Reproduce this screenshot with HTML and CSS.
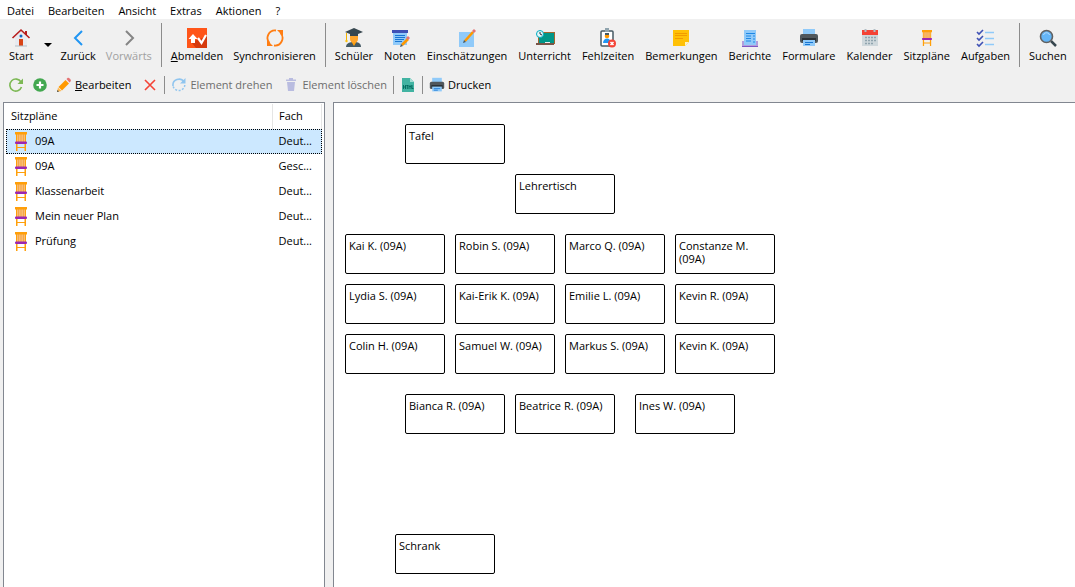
FILE: index.html
```html
<!DOCTYPE html>
<html lang="de">
<head>
<meta charset="utf-8">
<title>Sitzpläne</title>
<link rel="stylesheet" href="styles.css">
</head>
<body>
<svg class="defs" aria-hidden="true">
  <symbol id="chair" viewBox="0 0 20 20">
    <path fill="#f9bd72" d="M5.500 3h9v8h-9z"/>
    <path stroke="#f5a54a" d="M7.500 3v8M10 3v8M12.500 3v8"/>
    <path fill="#ff9f0a" d="M4 1h12v2.500H4zM5 3h1v8H5zM14 3h1v8h-1zM5 13h1.500v7H5zM13.500 13H15v7h-1.500zM6 16h8v1H6z"/>
    <rect x="4" y="10.500" width="12" height="2.500" rx="1" fill="#9c27b0"/>
  </symbol>
  <symbol id="printer" viewBox="0 0 20 20">
    <path fill="#90caf9" d="M4 1h12v6H4z"/>
    <rect x="1" y="6" width="18" height="9" rx="2" fill="#50575c"/>
    <path fill="#2b3238" d="M3 10h14v3H3z"/>
    <path fill="#90caf9" d="M4 12h12v6H4z"/>
    <path stroke="#1976d2" d="M6 14.500h8M6 16.500h5"/>
  </symbol>
</svg>

<nav class="menubar">
  <button>Datei</button><button>Bearbeiten</button><button>Ansicht</button><button>Extras</button><button>Aktionen</button><button>?</button>
</nav>

<div class="toolbar" role="toolbar">
  <button class="tool">
    <svg viewBox="0 0 20 20"><path fill="#e8eaf0" d="M4 9l6-6 6 6v9H4z"/><path fill="#b71c1c" d="M14 3h2v4h-2z"/><path fill="none" stroke="#b71c1c" stroke-width="1.600" d="M1.500 10L10 2l8.500 8"/><path fill="#d84315" d="M8 11h4v7H8z"/><circle cx="10" cy="8" r="1.500" fill="#1565c0"/><path stroke="#b0bec5" d="M4 18h12"/></svg>
    <span>Start</span>
  </button>
  <button class="drop" aria-label="Startmenü"><svg viewBox="0 0 8 4"><path d="M0 0h8L4 4z"/></svg></button>
  <button class="tool">
    <svg viewBox="0 0 20 20"><path fill="none" stroke="#2196f3" stroke-width="2" d="M14 3l-7 7 7 7"/></svg>
    <span>Zurück</span>
  </button>
  <button class="tool" disabled>
    <svg viewBox="0 0 20 20"><path fill="none" stroke="#858585" stroke-width="2" d="M7 3l7 7-7 7"/></svg>
    <span>Vorwärts</span>
  </button>
  <span class="sep"></span>
  <button class="tool">
    <svg viewBox="0 0 20 20"><path fill="#ff5519" d="M0 0h20v20H0z"/><path fill="#d63a0d" d="M4 14l9-3 7-3v12H9z"/><path fill="#fff" d="M1.500 11l4.500-5 4.500 5H8v4H4v-4z"/><path fill="none" stroke="#fff" stroke-width="2.200" d="M11 10l3.500 5L19 7"/></svg>
    <span><u>A</u>bmelden</span>
  </button>
  <button class="tool">
    <svg viewBox="0 0 20 20"><path fill="none" stroke="#ff7d12" stroke-width="1.800" d="M11 2.500A7.500 7.500 0 0 0 4.500 15M9 17.500A7.500 7.500 0 0 0 15.500 5"/><path fill="#ff7d12" d="M12 2h6v6zM8 18H2v-6z" transform="matrix(1 0 0 1 0 0)"/></svg>
    <span>Synchronisieren</span>
  </button>
  <span class="sep"></span>
  <div class="group">
  <button class="tool">
    <svg viewBox="0 0 20 20"><path fill="#455a64" d="M2 19c0-4 4-5 8-5s7 1 7 5z"/><path fill="#ff9f0a" d="M7 13h6l-3 5z"/><path fill="#ffa52b" d="M6 6h8v5c0 5-8 5-8 0z"/><path fill="#37474f" d="M10 0l9 4-5 2v2H6V6L1 4z"/><path fill="none" stroke="#f4b400" d="M2.500 5v8"/><circle cx="2.500" cy="13" r="1.200" fill="#ffc107"/></svg>
    <span>Schüler</span>
  </button>
  <button class="tool">
    <svg viewBox="0 0 20 20"><path fill="#90caf9" d="M3 2h14v15H3z"/><path fill="#3f51b5" d="M2 2h16v3H2z"/><path stroke="#1976d2" d="M5 7.500h10M5 9.500h10M5 11.500h9M5 13.500h7"/><path stroke="#ff9800" stroke-width="2.600" d="M12 17l6-6"/><path fill="#e57373" d="M16 10l2-2 2 2-2 2z"/><path fill="#455a64" d="M10 19l1-3 2 2z"/></svg>
    <span>Noten</span>
  </button>
  <button class="tool">
    <svg viewBox="0 0 20 20"><path fill="#90caf9" d="M2 4h15v15H2z"/><path stroke="#ff9800" stroke-width="2.600" d="M8 13l8-9"/><path fill="#e57373" d="M15 3l2-2 2 2-2 2z"/><path fill="#455a64" d="M6 15l1-3 2 2z"/></svg>
    <span>Einschätzungen</span>
  </button>
  <button class="tool">
    <svg viewBox="0 0 20 20"><path fill="#a1662f" d="M3 4h17v12H3z"/><path fill="#009688" d="M4 5h15v10H4z"/><path fill="#795548" d="M1 15h18v2H1z"/><circle cx="5" cy="6" r="3.500" fill="#e0f7fa" stroke="#00acc1"/><path fill="none" stroke="#263238" d="M5 4v2l2 1"/><path fill="#eceff1" d="M10 14h5v1h-5z"/></svg>
    <span>Unterricht</span>
  </button>
  <button class="tool">
    <svg viewBox="0 0 20 20"><rect x="3" y="3" width="12" height="15" rx="1" fill="#fff" stroke="#455a64" stroke-width="1.500"/><path fill="#90a4ae" d="M7 0h4v4H7z"/><circle cx="9" cy="8" r="2.300" fill="#ff9800"/><path fill="#455a64" d="M7 5h4v2H7z"/><path fill="#2196f3" d="M5 15c0-6 8-6 8 0z"/><circle cx="14" cy="15.500" r="4" fill="#f44336"/><path stroke="#fff" stroke-width="1.500" d="M12.500 14l3 3M15.500 14l-3 3"/></svg>
    <span>Fehlzeiten</span>
  </button>
  <button class="tool">
    <svg viewBox="0 0 20 20"><path fill="#ffc107" d="M2 2h16v12l-4 4H2z"/><path fill="#fff3c4" d="M18 14l-4 4v-4z"/><path stroke="#f29b00" d="M4 5.500h12M4 7.500h12M4 10.500h8"/></svg>
    <span>Bemerkungen</span>
  </button>
  <button class="tool">
    <svg viewBox="0 0 20 20"><path fill="#b39ddb" d="M2 13h16v6H2z"/><path fill="#90caf9" d="M4 2h12v15H4z"/><path stroke="#1e88e5" stroke-width="1.200" d="M6 5.500h9M6 8h5M6 10.500h5M6 13h5M13 8h2M13 11h2M13 14h2"/><path fill="#7e57c2" d="M2 18h16v1H2z"/></svg>
    <span>Berichte</span>
  </button>
  <button class="tool"><svg><use href="#printer"/></svg><span>Formulare</span></button>
  <button class="tool">
    <svg viewBox="0 0 20 20"><path fill="#cfd8dc" d="M2 5h16v13H2z"/><path fill="#f44336" d="M2 2h16v5H2z"/><path stroke="#b0bec5" stroke-width="2" d="M5.500 1v3M14.500 1v3"/><path stroke="#90a4ae" stroke-width="1.500" stroke-dasharray="2 1" d="M5 9.500h11M5 12.500h11M5 15.500h8"/></svg>
    <span>Kalender</span>
  </button>
  <button class="tool"><svg viewBox="-2 -1 24 23"><use href="#chair" width="20" height="20"/></svg><span>Sitzpläne</span></button>
  <button class="tool">
    <svg viewBox="0 0 20 20"><path fill="none" stroke="#3f51b5" stroke-width="1.600" d="M2 4l2 2 4-4M2 10l2 2 4-4M2 16l2 2 4-4"/><path stroke="#90caf9" stroke-width="1.600" d="M10 4.500h9M10 10.500h9M10 16.500h9"/></svg>
    <span>Aufgaben</span>
  </button>
  </div>
  <span class="sep"></span>
  <button class="tool">
    <svg viewBox="0 0 20 20"><path stroke="#37474f" stroke-width="2.500" d="M13 13l5 5"/><circle cx="8.500" cy="8.500" r="6" fill="#64b5f6" stroke="#616161" stroke-width="1.600"/><path fill="none" stroke="#bbdefb" d="M5.500 7c1-3 5-3 6 0"/></svg>
    <span>Suchen</span>
  </button>
</div>

<div class="actions" role="toolbar">
  <button class="act" aria-label="Aktualisieren"><svg viewBox="0 0 16 16"><path fill="none" stroke="#7cb854" stroke-width="1.600" d="M13 5a6 6 0 1 0 .500 5"/><path fill="#7cb854" d="M15 1.500V7H9.500z"/></svg></button>
  <button class="act" aria-label="Hinzufügen"><svg viewBox="0 0 16 16"><circle cx="8" cy="8" r="6.800" fill="#43a850"/><path stroke="#fff" stroke-width="2.200" d="M8 4.500v7M4.500 8h7"/></svg></button>
  <button class="act wide"><svg viewBox="0 0 16 16"><path fill="#ff9800" d="M2.500 10l7-7 3.500 3.500-7 7z"/><path fill="#e57373" d="M10.500 2l1-1c1-1 4.500 2 3 3.500l-1 1z"/><path fill="#ffb74d" d="M2 10.500L5.500 14 1 15z"/><path fill="#37474f" d="M1.500 13L3 14.500 1 15z"/></svg><span><u>B</u>earbeiten</span></button>
  <button class="act" aria-label="Löschen"><svg viewBox="0 0 16 16"><path stroke="#f44336" stroke-width="1.600" d="M3 3l10 10M13 3L3 13"/></svg></button>
  <span class="sep"></span>
  <button class="act wide" disabled><svg viewBox="0 0 16 16"><path fill="none" stroke="#90c5ef" stroke-width="1.600" d="M2 9A6 6 0 0 1 13 5"/><path fill="none" stroke="#90c5ef" stroke-width="1.500" stroke-dasharray="2 1.500" d="M13.800 8A6 6 0 0 1 2 9"/><path fill="#90c5ef" d="M14.500 1v5.500H9z"/></svg><span>Element drehen</span></button>
  <button class="act" disabled><svg viewBox="0 0 16 16"><path fill="#b9bce0" d="M4 5h8l-1 9H5zM3 2.500h3V1h4v1.500h3V4H3z"/></svg><span>Element löschen</span></button>
  <span class="sep"></span>
  <button class="act" aria-label="HTML-Export"><svg viewBox="0 0 16 16"><path fill="#42b3a2" d="M2 1h8l4 4v10H2z"/><path fill="#a5ded5" d="M10 1l4 4h-4z"/><path stroke="#00695c" stroke-width=".9" fill="none" d="M3.500 8v4M5.500 8v4M3.500 10h2M6.300 8.500h2M7.300 8.500V12M9 12V8.500l1 1.500 1-1.500V12M12 8v3.500h1.500"/></svg></button>
  <span class="sep"></span>
  <button class="act"><svg><use href="#printer"/></svg><span>Drucken</span></button>
</div>

<main class="content">
  <section class="panel plans">
    <table>
      <thead><tr><th>Sitzpläne</th><th class="subject">Fach</th></tr></thead>
      <tbody>
        <tr class="selected"><td><span class="plan"><svg><use href="#chair"/></svg>09A</span></td><td>Deut...</td></tr>
        <tr><td><span class="plan"><svg><use href="#chair"/></svg>09A</span></td><td>Gesc...</td></tr>
        <tr><td><span class="plan"><svg><use href="#chair"/></svg>Klassenarbeit</span></td><td>Deut...</td></tr>
        <tr><td><span class="plan"><svg><use href="#chair"/></svg>Mein neuer Plan</span></td><td>Deut...</td></tr>
        <tr><td><span class="plan"><svg><use href="#chair"/></svg>Prüfung</span></td><td>Deut...</td></tr>
      </tbody>
    </table>
  </section>
  <section class="panel room">
    <div class="seat" style="left:71px;top:21px">Tafel</div>
    <div class="seat" style="left:181px;top:71px">Lehrertisch</div>
    <div class="seat" style="left:11px;top:131px">Kai K. (09A)</div>
    <div class="seat" style="left:121px;top:131px">Robin S. (09A)</div>
    <div class="seat" style="left:231px;top:131px">Marco Q. (09A)</div>
    <div class="seat" style="left:341px;top:131px">Constanze M. (09A)</div>
    <div class="seat" style="left:11px;top:181px">Lydia S. (09A)</div>
    <div class="seat" style="left:121px;top:181px">Kai-Erik K. (09A)</div>
    <div class="seat" style="left:231px;top:181px">Emilie L. (09A)</div>
    <div class="seat" style="left:341px;top:181px">Kevin R. (09A)</div>
    <div class="seat" style="left:11px;top:231px">Colin H. (09A)</div>
    <div class="seat" style="left:121px;top:231px">Samuel W. (09A)</div>
    <div class="seat" style="left:231px;top:231px">Markus S. (09A)</div>
    <div class="seat" style="left:341px;top:231px">Kevin K. (09A)</div>
    <div class="seat" style="left:71px;top:291px">Bianca R. (09A)</div>
    <div class="seat" style="left:181px;top:291px">Beatrice R. (09A)</div>
    <div class="seat" style="left:301px;top:291px">Ines W. (09A)</div>
    <div class="seat" style="left:61px;top:431px">Schrank</div>
  </section>
</main>
</body>
</html>
```
FILE: styles.css
```css
* { box-sizing: border-box; }

body {
  margin: 0;
  height: 100vh;
  display: flex;
  flex-direction: column;
  overflow: hidden;
  background: #f0f0f0;
  color: #000;
  font: 11px/16px "Open Sans", "Noto Sans", sans-serif;
}

button {
  border: 0;
  padding: 0;
  background: none;
  color: inherit;
  font: inherit;
  white-space: nowrap;
}

.defs { position: absolute; width: 0; height: 0; }

.menubar {
  display: flex;
  gap: 14px;
  height: 19px;
  padding: 2px 7px 0;
  background: #fff;
}

.menubar button { height: 17px; }

.toolbar {
  display: flex;
  align-items: flex-start;
  height: 54px;
  padding: 4px 4px 0;
}

.group { display: flex; gap: 1px; }

.tool {
  display: flex;
  flex-direction: column;
  align-items: center;
  padding: 5px 5px 0;
}

.tool svg { width: 20px; height: 20px; }
.tool:disabled { color: #a0a0a0; }

.drop { padding: 20px 3px 0 6px; }
.drop svg { display: block; width: 8px; height: 4px; }

.sep {
  flex: none;
  width: 1px;
  height: 44px;
  margin: 0 4px;
  background: #8c8c8c;
}

.actions {
  display: flex;
  align-items: center;
  height: 23px;
  padding: 0 4px;
}

.act { display: flex; align-items: center; gap: 3px; padding: 0 4px; }
.act.wide { padding-right: 7px; }
.act svg { width: 16px; height: 16px; }
.act:disabled { color: #6d6d6d; }
.actions .sep { height: 18px; margin: 0 2px; }

.content {
  flex: 1;
  display: flex;
  gap: 8px;
  min-height: 0;
  padding: 6px 0 0 3px;
}

.panel {
  border: 1px solid #828790;
  border-bottom: 0;
  background: #fff;
}

.plans { flex: none; width: 322px; padding: 1px 2px; }

.plans table {
  width: 100%;
  table-layout: fixed;
  border-collapse: collapse;
}

.plans th, .plans td {
  height: 25px;
  padding: 0 6px 2px;
  text-align: left;
  font-weight: 400;
}

.plans th:first-child, .plans td:first-child { padding-left: 5px; }
.plans th { border-right: 1px solid #e5e5e5; }
.plans .subject { width: 49px; }

.selected {
  background: #cce8ff;
  outline: 1px dotted #000;
  outline-offset: -1px;
}

.plan { display: flex; align-items: center; gap: 4px; }
.plan svg { width: 20px; height: 20px; }

.room { position: relative; flex: 1; border-right: 0; }

.seat {
  position: absolute;
  width: 100px;
  height: 40px;
  padding: 4px 3px;
  border: 1px solid #000;
  border-radius: 2px;
  line-height: 13px;
}
```
